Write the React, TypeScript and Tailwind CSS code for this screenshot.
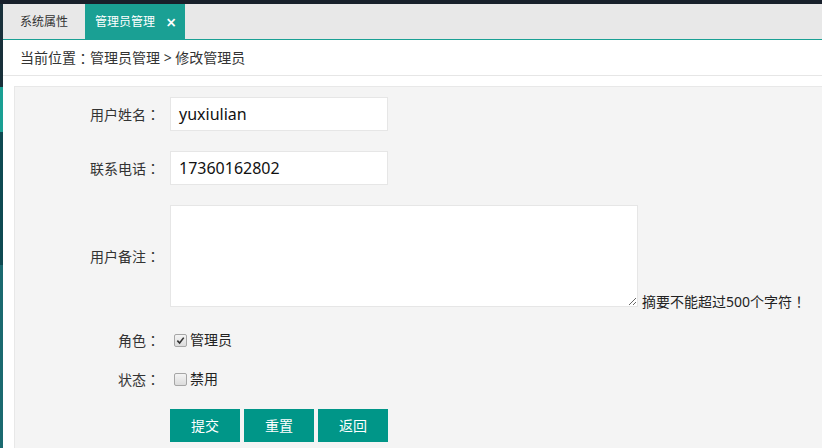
import React from "react";

const font = { fontFamily: '"Noto Sans", "Noto Sans CJK SC", sans-serif' };

// full-width punctuation centred in its box, as in the screenshot
function P({ children }: { children: React.ReactNode }) {
  return <span style={{ fontFamily: '"Noto Sans CJK TC", sans-serif' }}>{children}</span>;
}

function Label({ children }: { children: React.ReactNode }) {
  return (
    <div className="w-[155px] shrink-0 pr-[10px] text-right text-[14px] text-[#333]">
      {children}
      <P>：</P>
    </div>
  );
}

function Check({ checked, label }: { checked?: boolean; label: string }) {
  return (
    <div className="flex items-center pl-[4px]">
      <span className="flex h-[13px] w-[13px] items-center justify-center rounded-[2px] border border-[#a6a6a6] bg-gradient-to-b from-[#f4f4f4] to-[#dcdcdc]">
        {checked && (
          <svg viewBox="0 0 10 10" className="h-[9px] w-[9px]">
            <path d="M1.5 5.2 L4 7.8 L8.6 1.8" fill="none" stroke="#333" strokeWidth="1.8" />
          </svg>
        )}
      </span>
      <span className="ml-[3px] text-[14px] text-[#222]">{label}</span>
    </div>
  );
}

export default function App() {
  return (
    <div style={font} className="flex h-[448px] w-[822px] flex-col overflow-hidden bg-white leading-none">
      <div className="h-[4px] shrink-0 bg-[#18202b]" />
      <div className="flex flex-1 min-h-0">
        {/* side strip */}
        <div className="flex w-[3px] shrink-0 flex-col">
          <div className="h-[83px] bg-[#18303a]" />
          <div className="h-[45px] bg-[#1aa094]" />
          <div className="h-[133px] bg-[#0f4a52]" />
          <div className="flex-1 bg-[#1b6a70]" />
        </div>
        <div className="flex flex-1 flex-col">
          {/* tabs */}
          <div className="flex h-[36px] shrink-0 border-b border-[#1aa094] bg-[#e8e8e8]">
            <div className="flex w-[82px] items-center pl-[17px] text-[12px] text-[#333]">系统属性</div>
            <div className="flex w-[100px] items-center bg-[#1aa094] pl-[10px] text-[12px] text-white">
              管理员管理
              <span className="ml-[11px] text-[18px] font-semibold">×</span>
            </div>
          </div>
          {/* breadcrumb */}
          <div className="flex h-[36px] shrink-0 items-center border-b border-[#e6e6e6] pl-[17px] text-[14px] text-[#333]">
            当前位置<P>：</P>管理员管理 &gt; 修改管理员
          </div>
          <div className="h-[10px] shrink-0" />
          {/* form panel */}
          <div className="ml-[11px] flex-1 border-l border-t border-[#e8e8e8] bg-[#f4f4f4] pt-[10px]">
            <div className="flex h-[34px] items-center">
              <Label>用户姓名</Label>
              <div className="flex h-[34px] w-[218px] items-center border border-[#e6e6e6] bg-white pl-[8px] text-[16px] text-[#111]">
                yuxiulian
              </div>
            </div>
            <div className="mt-[20px] flex h-[34px] items-center">
              <Label>联系电话</Label>
              <div className="flex h-[34px] w-[218px] items-center border border-[#e6e6e6] bg-white pl-[8px] text-[16px] text-[#111]">
                17360162802
              </div>
            </div>
            <div className="mt-[20px] flex items-center">
              <Label>用户备注</Label>
              <div className="flex items-end">
                <textarea className="block h-[102px] w-[468px] border border-[#e6e6e6] bg-white outline-none" />
                <span className="mb-[-2px] ml-[4px] text-[14px] text-[#222]">
                  摘要不能超过500个字符<P>！</P>
                </span>
              </div>
            </div>
            <div className="mt-[23px] flex h-[20px] items-center">
              <Label>角色</Label>
              <Check checked label="管理员" />
            </div>
            <div className="mt-[19px] flex h-[20px] items-center">
              <Label>状态</Label>
              <Check label="禁用" />
            </div>
            <div className="mt-[20px] flex">
              <div className="w-[155px] shrink-0" />
              <div className="flex gap-[4px]">
                {["提交", "重置", "返回"].map((t) => (
                  <button key={t} className="h-[33px] w-[70px] bg-[#009688] text-[14px] text-white">
                    {t}
                  </button>
                ))}
              </div>
            </div>
          </div>
        </div>
      </div>
    </div>
  );
}
